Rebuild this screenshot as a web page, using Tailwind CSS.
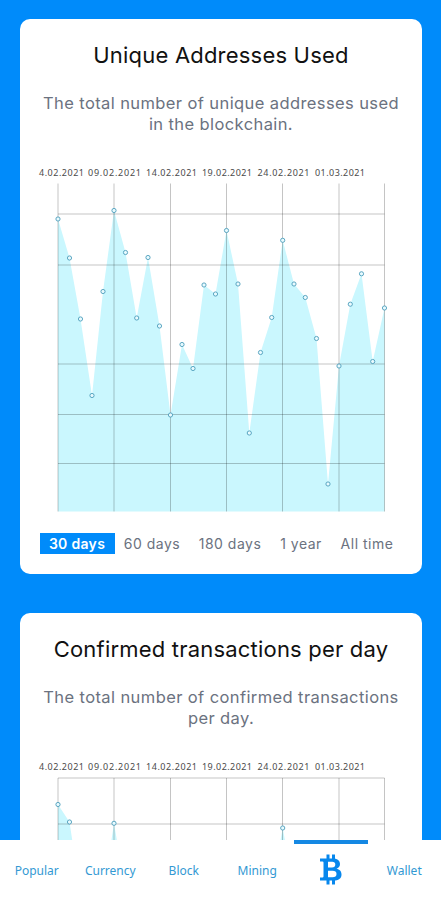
<!DOCTYPE html>
<html lang="en">
<head>
<meta charset="utf-8">
<title>Blockchain charts</title>
<script src="https://cdn.jsdelivr.net/npm/@tailwindcss/browser@4"></script>
</head>
<body class="flex h-[900px] w-[441px] flex-col overflow-hidden bg-[#008bfa] font-['Inter',sans-serif]">
<main class="flex min-h-0 flex-1 flex-col gap-[39px] overflow-hidden pt-[19px] pr-[19px] pl-5">
  <section class="flex h-[555px] shrink-0 flex-col rounded-[10px] bg-white text-center">
    <h2 class="mt-[21px] text-[22px] leading-[30px] text-[#111111]"><span class="tracking-[0.2px]">Unique Addresses Used</span></h2>
    <p class="mt-[23px] text-[16.5px] leading-[21px] tracking-[0.4px] text-[#6b7280]">The total number of unique addresses used<br>in the blockchain.</p>
    <svg class="mt-[25px] block h-[360px] w-[402px] shrink-0" viewBox="20 160 402 360">
      <path fill="#caf7fe" d="M58 511.5V219L69.5 258 80.5 319 92 395.5 103 291.5 114 210.5 125.5 252.5 136.7 318 148 257.5 159.5 326 170.5 415 182 344.5 193 368.5 204 285 215.5 294 226.5 230.5 238 284 249.3 433 260.5 352.5 271.7 317.5 282.7 240.3 294 284 305.3 297.5 316.5 338.5 328 484 339 366 350.3 304.2 361.5 273.8 372.7 361.5 384.5 308V511.5Z"/>
      <path fill="none" stroke="#000" stroke-opacity=".23" d="M58 183.500V511.500M114 183.500V511.500M170.500 183.500V511.500M226.500 183.500V511.500M282.500 183.500V511.500M339 183.500V511.500M384.500 183.500V511.500M58 214H384.500M58 265H384.500M58 364H384.500M58 414.500H384.500M58 463.500H384.500"/>
      <g fill="#e9fbff" stroke="#4c9dbb" stroke-width=".9">
        <circle cx="58" cy="219" r="2.1"/><circle cx="69.500" cy="258" r="2.1"/><circle cx="80.500" cy="319" r="2.1"/><circle cx="92" cy="395.500" r="2.1"/><circle cx="103" cy="291.500" r="2.1"/><circle cx="114" cy="210.500" r="2.1"/><circle cx="125.500" cy="252.500" r="2.1"/><circle cx="136.700" cy="318" r="2.1"/><circle cx="148" cy="257.500" r="2.1"/><circle cx="159.500" cy="326" r="2.1"/><circle cx="170.500" cy="415" r="2.1"/><circle cx="182" cy="344.500" r="2.1"/><circle cx="193" cy="368.500" r="2.1"/><circle cx="204" cy="285" r="2.1"/><circle cx="215.500" cy="294" r="2.1"/><circle cx="226.500" cy="230.500" r="2.1"/><circle cx="238" cy="284" r="2.1"/><circle cx="249.300" cy="433" r="2.1"/><circle cx="260.500" cy="352.500" r="2.1"/><circle cx="271.700" cy="317.500" r="2.1"/><circle cx="282.700" cy="240.300" r="2.1"/><circle cx="294" cy="284" r="2.1"/><circle cx="305.300" cy="297.500" r="2.1"/><circle cx="316.500" cy="338.500" r="2.1"/><circle cx="328" cy="484" r="2.1"/><circle cx="339" cy="366" r="2.1"/><circle cx="350.300" cy="304.200" r="2.1"/><circle cx="361.500" cy="273.800" r="2.1"/><circle cx="372.700" cy="361.500" r="2.1"/><circle cx="384.500" cy="308" r="2.1"/>
      </g>
      <g class="font-['Noto_Sans',sans-serif] text-[9px]" fill="#4a4a4a">
        <text x="39" y="176" textLength="45">4.02.2021</text><text x="88" y="176" textLength="53">09.02.2021</text><text x="146" y="176" textLength="51">14.02.2021</text><text x="202" y="176" textLength="50">19.02.2021</text><text x="257.500" y="176" textLength="52">24.02.2021</text><text x="315" y="176" textLength="50">01.03.2021</text>
      </g>
    </svg>
    <div class="mt-[13px] flex pl-[19.500px] text-[14px] leading-[21px] text-[#6b7280]">
      <span class="w-[75px] bg-[#008bfa] font-semibold tracking-[0.300px] text-white">30 days</span>
      <span class="w-[75px] tracking-[0.500px]">60 days</span>
      <span class="w-[81px] tracking-[0.500px]">180 days</span>
      <span class="w-[61px] tracking-[0.500px]">1 year</span>
      <span class="w-[71px] tracking-[0.500px]">All time</span>
    </div>
  </section>
  <section class="flex h-[555px] shrink-0 flex-col rounded-[10px] bg-white text-center">
    <h2 class="mt-[21px] text-[22px] leading-[30px] text-[#111111]"><span class="tracking-[0.2px]">Confirmed transactions per day</span></h2>
    <p class="mt-[23px] text-[16.5px] leading-[21px] tracking-[0.4px] text-[#6b7280]">The total number of confirmed transactions<br>per day.</p>
    <svg class="mt-[25px] block h-[360px] w-[402px] shrink-0" viewBox="20 754 402 360">
      <path fill="#caf7fe" d="M58 1105V804.500L69.500 822 80.500 895 103 895 114 823.500 125.500 890 271.700 890 282.700 828 294 890V1105Z"/>
      <path fill="none" stroke="#000" stroke-opacity=".23" d="M58 778V1105M114 778V1105M170.500 778V1105M226.500 778V1105M282.500 778V1105M339 778V1105M384.500 778V1105M58 778H384.500M58 824H384.500"/>
      <g fill="#e9fbff" stroke="#4c9dbb" stroke-width=".9"><circle cx="58" cy="804.500" r="2.1"/><circle cx="69.500" cy="822" r="2.1"/><circle cx="114" cy="823.300" r="2.1"/><circle cx="282.700" cy="828" r="2.1"/></g>
      <g class="font-['Noto_Sans',sans-serif] text-[9px]" fill="#4a4a4a">
        <text x="39" y="770" textLength="45">4.02.2021</text><text x="88" y="770" textLength="53">09.02.2021</text><text x="146" y="770" textLength="51">14.02.2021</text><text x="202" y="770" textLength="50">19.02.2021</text><text x="257.500" y="770" textLength="52">24.02.2021</text><text x="315" y="770" textLength="50">01.03.2021</text>
      </g>
    </svg>
  </section>
</main>
<nav class="grid h-[60px] shrink-0 grid-cols-6 bg-white text-center font-['Noto_Sans',sans-serif] text-[12px] leading-[61px] text-[#3399d3]">
  <a>Popular</a>
  <a>Currency</a>
  <a>Block</a>
  <a>Mining</a>
  <a class="flex flex-col items-center" aria-label="Bitcoin">
    <span class="h-[4px] w-full bg-[#1588e3]"></span>
    <svg class="mt-[10px] h-[31px] w-[22px]" viewBox="0 0 22 31" fill="#0787ed" fill-rule="evenodd">
      <path d="M6.500 .500H9.500V5H6.500ZM12 .500H15V5H12ZM6.500 26H9.500V30.500H6.500ZM12 26H15V30.500H12Z"/>
      <path d="M0 4.500H13C18 4.500 20 7 20 10C20 12.500 18.500 14 16.500 14.800C19.500 15.500 21.500 17 21.500 20.500C21.500 24.500 18.500 26.500 13.500 26.500H0V23.500H2.500Q3.500 23.500 3.500 22.500V8.500Q3.500 7.500 2.500 7.500H0ZM8 7.800V13.500H12Q15.300 13.500 15.300 10.600T12 7.800ZM8 16.800V23.200H12.500Q16.500 23.200 16.500 20T12.500 16.800Z"/>
    </svg>
  </a>
  <a>Wallet</a>
</nav>
</body>
</html>
